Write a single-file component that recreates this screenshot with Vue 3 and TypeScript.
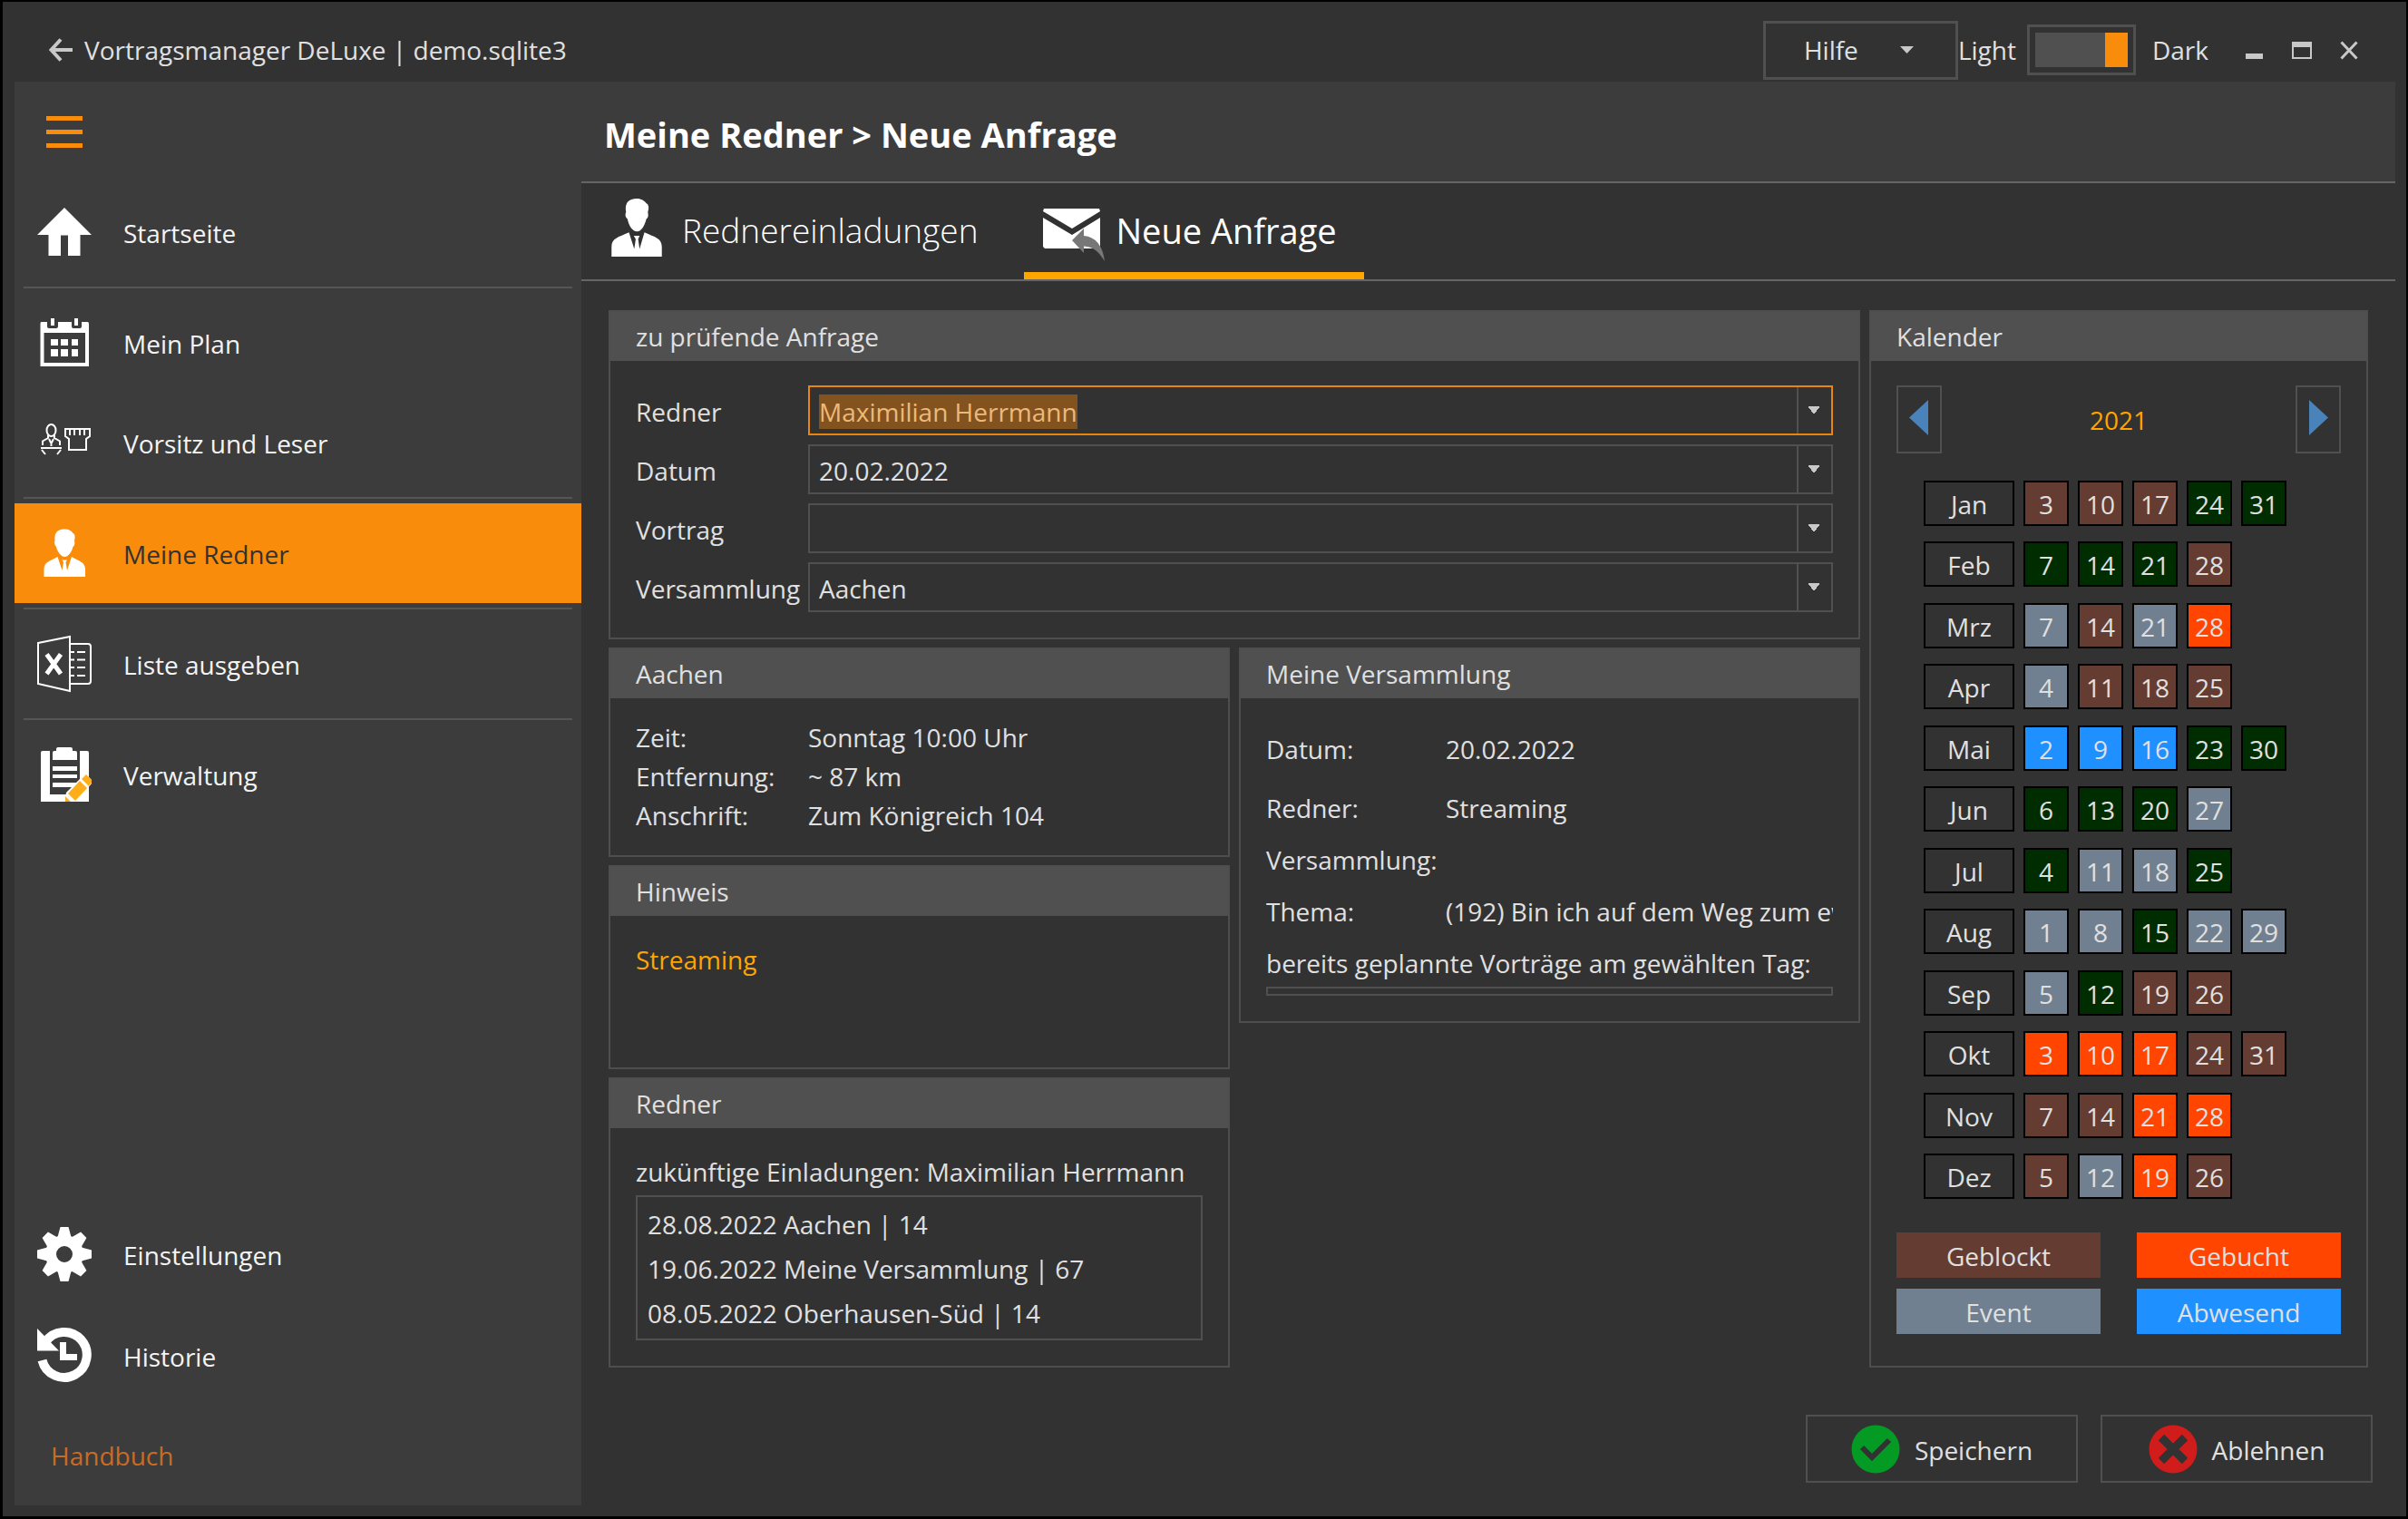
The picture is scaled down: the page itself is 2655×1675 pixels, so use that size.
<script setup lang="ts">
import { onMounted, ref } from 'vue'

type Status = 'blocked' | 'free' | 'event' | 'booked' | 'away'

interface NavItem {
  label: string
  icon: string
  active?: boolean
  ruleAfter?: boolean
}

interface Month {
  name: string
  days: [number, Status][]
}

const mainNav: NavItem[] = [
  { label: 'Startseite', icon: 'home', ruleAfter: true },
  { label: 'Mein Plan', icon: 'plan' },
  { label: 'Vorsitz und Leser', icon: 'chair', ruleAfter: true },
  { label: 'Meine Redner', icon: 'person', active: true, ruleAfter: true },
  { label: 'Liste ausgeben', icon: 'excel', ruleAfter: true },
  { label: 'Verwaltung', icon: 'clipboard' },
]

const footNav: NavItem[] = [
  { label: 'Einstellungen', icon: 'gear' },
  { label: 'Historie', icon: 'history' },
]

const statusByLetter: Record<string, Status> = {
  b: 'blocked',
  f: 'free',
  e: 'event',
  g: 'booked',
  a: 'away',
}

const plan: [string, string][] = [
  ['Jan', '3b 10b 17b 24f 31f'],
  ['Feb', '7f 14f 21f 28b'],
  ['Mrz', '7e 14b 21e 28g'],
  ['Apr', '4e 11b 18b 25b'],
  ['Mai', '2a 9a 16a 23f 30f'],
  ['Jun', '6f 13f 20f 27e'],
  ['Jul', '4f 11e 18e 25f'],
  ['Aug', '1e 8e 15f 22e 29e'],
  ['Sep', '5e 12f 19b 26b'],
  ['Okt', '3g 10g 17g 24b 31b'],
  ['Nov', '7b 14b 21g 28g'],
  ['Dez', '5b 12e 19g 26b'],
]

const months: Month[] = plan.map(([name, list]) => ({
  name,
  days: list
    .split(' ')
    .map((d): [number, Status] => [parseInt(d, 10), statusByLetter[d.slice(-1)]]),
}))

const legend: { label: string; status: Status }[] = [
  { label: 'Geblockt', status: 'blocked' },
  { label: 'Gebucht', status: 'booked' },
  { label: 'Event', status: 'event' },
  { label: 'Abwesend', status: 'away' },
]

const invitations = [
  '28.08.2022 Aachen | 14',
  '19.06.2022 Meine Versammlung | 67',
  '08.05.2022 Oberhausen-Süd | 14',
]

const year = ref(2021)
const dark = ref(true)
const speaker = ref('Maximilian Herrmann')
const speakerInput = ref<HTMLInputElement | null>(null)

onMounted(() => {
  speakerInput.value?.focus()
  speakerInput.value?.select()
})
</script>

<template>
  <div class="window">
    <header class="titlebar">
      <button class="plain back" type="button" aria-label="Zurück">
        <svg width="26" height="26" viewBox="0 0 26 26">
          <path d="M13 1.500L2.500 13L13 24.500M3 13H26" fill="none" stroke="#c8c8c8" stroke-width="4" />
        </svg>
      </button>
      <span class="apptitle">Vortragsmanager DeLuxe | demo.sqlite3</span>
      <button class="help" type="button">
        Hilfe
        <svg width="15" height="8" viewBox="0 0 15 8"><path d="M0 0H15L7.500 8Z" fill="#c8c8c8" /></svg>
      </button>
      <label class="theme">
        <span>Light</span>
        <input v-model="dark" class="switch" type="checkbox" />
        <span>Dark</span>
      </label>
      <div class="winbuttons">
        <button class="plain" type="button" aria-label="Minimieren">
          <svg width="22" height="22" viewBox="0 0 22 22"><path d="M1 15H20V21H1Z" fill="#c8c8c8" /></svg>
        </button>
        <button class="plain" type="button" aria-label="Maximieren">
          <svg width="22" height="22" viewBox="0 0 22 22">
            <path d="M0 2H22V21H0ZM2 8V19H20V8Z" fill="#c8c8c8" fill-rule="evenodd" />
          </svg>
        </button>
        <button class="plain" type="button" aria-label="Schließen">
          <svg width="22" height="22" viewBox="0 0 22 22">
            <path d="M2.500 2.500L19.500 20.500M19.500 2.500L2.500 20.500" fill="none" stroke="#c8c8c8" stroke-width="3" />
          </svg>
        </button>
      </div>
    </header>

    <div class="body">
      <aside class="sidebar">
        <button class="plain burger" type="button" aria-label="Menü">
          <svg width="40" height="36" viewBox="0 0 40 36">
            <path d="M0 0H40V5H0ZM0 15H40V20H0ZM0 30H40V35H0Z" fill="#f98c0a" />
          </svg>
        </button>
        <nav class="nav">
          <template v-for="item in mainNav" :key="item.label">
            <a href="#" class="navitem" :class="{ active: item.active }">
              <svg v-if="item.icon === 'home'" width="60" height="60" viewBox="0 0 60 60">
                <path d="M30 3L60 33H47.500V56H34V33.500H26V56H12.500V33H0Z" fill="#fff" />
              </svg>
              <svg v-else-if="item.icon === 'plan'" width="60" height="60" viewBox="0 0 60 60">
                <path
                  d="M4.500 7H11V12Q11 14 13 14H21Q23 14 23 12V7H38V12Q38 14 40 14H47Q49 14 49 12V7H55.500Q57 7 57 9V56H3.500V9Q3.500 7 4.500 7ZM7.500 19V52H53V19Z"
                  fill="#fff"
                  fill-rule="evenodd"
                />
                <path
                  d="M15 3H19V11H15ZM41 3H45V11H41ZM15 26H23V33H15ZM26 26H34V33H26ZM38 26H45V33H38ZM15 37H23V45H15ZM26 37H34V45H26ZM38 37H45V45H38Z"
                  fill="#fff"
                />
              </svg>
              <svg v-else-if="item.icon === 'chair'" width="60" height="60" viewBox="0 0 60 60">
                <g fill="none" stroke="#fff" stroke-width="2">
                  <ellipse cx="15.500" cy="16.500" rx="5" ry="6.500" />
                  <path d="M12 22V25L6 28.500V33M19 22V25L25 28.500V33M13 26L15.500 31L18 26M15.500 29V34" />
                  <path d="M4 36H27M5 38L9 43M26 38L22 43" />
                  <path d="M31 15H58V23L54 26V38H35V26L31 23ZM36 16V22M41 16V22M47 16V22M52 16V22" />
                </g>
              </svg>
              <svg v-else-if="item.icon === 'person'" width="60" height="60" viewBox="0 0 60 60">
                <path
                  d="M29 3.500C34 3 38 5 39.500 8C42 9 42 13 41 16C42 19 41 22 39.500 23C38 29 34 34 30.500 34C26.500 34 22.500 29 21 23C19 21 18.500 18 19.500 16C18.500 8 22 4 29 3.500Z"
                  fill="#fff"
                />
                <path
                  d="M7.500 56V48C7.500 40 13 39 22.500 34L27.500 49L29 40L27.500 37.500H33L31.500 40L33 49L38 34C47 39 53 40 53 48V56Z"
                  fill="#fff"
                />
              </svg>
              <svg v-else-if="item.icon === 'excel'" width="60" height="62" viewBox="0 0 60 62">
                <path d="M1 8L36 1V61L1 53ZM36 9H56Q59 9 59 12V50Q59 53 56 53H36" fill="none" stroke="#fff" stroke-width="2" />
                <path
                  d="M36 18H41M44 18H53M36 26.500H41M44 26.500H53M36 35H41M44 35H53M36 44H41M44 44H53"
                  stroke="#fff"
                  stroke-width="2"
                />
                <path d="M10.500 20.500L26 42M26 20.500L10.500 42" fill="none" stroke="#fff" stroke-width="5" />
              </svg>
              <svg v-else width="60" height="60" viewBox="0 0 60 60">
                <path
                  d="M6 4H14V52H47V4H55Q57 4 57 6V60H4V6Q4 4 6 4ZM17 6Q17 4 19 4H21V2Q21 0 23 0H37Q39 0 39 2V4H42Q44 4 44 6V14H17ZM17 21H44V26H17ZM17 30H44V34H17ZM17 39H44V44H17Z"
                  fill="#fff"
                />
                <path d="M30 60L32 50L53 29L60 36V40L43 60Z" fill="#fff" />
                <path d="M49 35L54 30L60 36V39L57 43ZM47 37L55 45L42 59L34 51ZM31 54L37 60H31Z" fill="#ffae19" />
              </svg>
              <span>{{ item.label }}</span>
            </a>
            <hr v-if="item.ruleAfter" class="rule" />
          </template>
        </nav>
        <nav class="nav foot">
          <a v-for="item in footNav" :key="item.label" href="#" class="navitem">
            <svg v-if="item.icon === 'gear'" width="60" height="60" viewBox="0 0 60 60">
              <circle cx="30" cy="30" r="15" fill="none" stroke="#fff" stroke-width="12" />
              <path
                v-for="n in 8"
                :key="n"
                d="M22 13L25.500 0H34.500L38 13Z"
                fill="#fff"
                :transform="`rotate(${n * 45} 30 30)`"
              />
            </svg>
            <svg v-else width="60" height="60" viewBox="0 0 60 60">
              <path d="M9 15A25 25 0 1 1 5.500 35" fill="none" stroke="#fff" stroke-width="10" />
              <path d="M0 0L24 24.500H0Z" fill="#fff" />
              <path d="M25 15H32V28H44V35H25Z" fill="#fff" />
            </svg>
            <span>{{ item.label }}</span>
          </a>
        </nav>
        <a href="#" class="manual">Handbuch</a>
      </aside>

      <main class="main">
        <h1 class="heading">Meine Redner &gt; Neue Anfrage</h1>
        <nav class="tabs">
          <button class="tab" type="button">
            <svg width="64" height="64" viewBox="0 0 60 60">
              <path
                d="M29 0C34 -0.500 38 2 40 5C42.500 6 43 10 41.500 14C42.500 18 41.500 20 40 21C38 29 34 34 30.500 34C26.500 34 22 29 20.500 21C18 19 18 16 19 14C17.500 5 21 0.500 29 0Z"
                fill="#fff"
              />
              <path
                d="M4 60V50C4 41 11 40 22 35L27.500 52L29 42L27 38.500H33L31.500 42L33 52L38 35C49 40 56 41 56 50V60Z"
                fill="#fff"
              />
            </svg>
            <span>Rednereinladungen</span>
          </button>
          <button class="tab current" type="button">
            <svg width="70" height="76" viewBox="0 -16 70 76">
              <path d="M2 1H63L64 4L33 23L1 4ZM1 11L33 30L64 11V43L62 45H3L1 43Z" fill="#fff" />
              <path d="M33 36L46 23V31C59 32 67 42 69 59C62 48 56 43 46 42.500V50Z" fill="#777" />
            </svg>
            <span>Neue Anfrage</span>
          </button>
        </nav>

        <div class="content">
          <div class="details">
            <section class="panel wide">
              <h2>zu prüfende Anfrage</h2>
              <form class="fields" @submit.prevent>
                <label for="redner">Redner</label>
                <div class="combo focus">
                  <input id="redner" ref="speakerInput" v-model="speaker" type="text" />
                  <button type="button" aria-label="Redner auswählen"></button>
                </div>
                <label for="datum">Datum</label>
                <select id="datum"><option>20.02.2022</option></select>
                <label for="vortrag">Vortrag</label>
                <select id="vortrag"><option></option></select>
                <label for="versammlung">Versammlung</label>
                <select id="versammlung"><option>Aachen</option></select>
              </form>
            </section>

            <div class="stack">
              <section class="panel">
                <h2>Aachen</h2>
                <dl class="place">
                  <dt>Zeit:</dt>
                  <dd>Sonntag 10:00 Uhr</dd>
                  <dt>Entfernung:</dt>
                  <dd>~ 87 km</dd>
                  <dt>Anschrift:</dt>
                  <dd>Zum Königreich 104</dd>
                </dl>
              </section>
              <section class="panel">
                <h2>Hinweis</h2>
                <p class="hint">Streaming</p>
              </section>
              <section class="panel">
                <h2>Redner</h2>
                <div class="invites">
                  <p>zukünftige Einladungen: Maximilian Herrmann</p>
                  <ul>
                    <li v-for="entry in invitations" :key="entry">{{ entry }}</li>
                  </ul>
                </div>
              </section>
            </div>

            <div class="stack">
              <section class="panel">
                <h2>Meine Versammlung</h2>
                <div class="own">
                  <dl>
                    <dt class="tall">Datum:</dt>
                    <dd class="tall">20.02.2022</dd>
                    <dt class="tall">Redner:</dt>
                    <dd class="tall">Streaming</dd>
                    <dt>Versammlung:</dt>
                    <dd></dd>
                    <dt>Thema:</dt>
                    <dd>(192) Bin ich auf dem Weg zum ewigen</dd>
                  </dl>
                  <p>bereits geplannte Vorträge am gewählten Tag:</p>
                  <div class="emptylist"></div>
                </div>
              </section>
            </div>
          </div>

          <section class="panel calendar">
            <h2>Kalender</h2>
            <div class="calbody">
              <div class="years">
                <button type="button" aria-label="Vorheriges Jahr" @click="year--">
                  <svg width="22" height="40" viewBox="0 0 22 40"><path d="M21 0V39L0 19.500Z" fill="#4a82ba" /></svg>
                </button>
                <span>{{ year }}</span>
                <button type="button" aria-label="Nächstes Jahr" @click="year++">
                  <svg width="22" height="40" viewBox="0 0 22 40"><path d="M1 0V39L22 19.500Z" fill="#4a82ba" /></svg>
                </button>
              </div>
              <div class="months">
                <div v-for="month in months" :key="month.name" class="month">
                  <span class="name">{{ month.name }}</span>
                  <span v-for="[day, status] in month.days" :key="day" class="day" :class="status">{{ day }}</span>
                </div>
              </div>
              <div class="legend">
                <span v-for="entry in legend" :key="entry.label" :class="entry.status">{{ entry.label }}</span>
              </div>
            </div>
          </section>
        </div>

        <footer class="actions">
          <button type="button">
            <svg width="54" height="54" viewBox="0 0 54 54">
              <circle cx="27" cy="27" r="26.500" fill="#049b24" />
              <path d="M12 25L23 36L42 17" fill="none" stroke="#323232" stroke-width="6" />
            </svg>
            <span>Speichern</span>
          </button>
          <button type="button">
            <svg width="54" height="54" viewBox="0 0 54 54">
              <circle cx="27" cy="27" r="26.500" fill="#d11c1c" />
              <path d="M14 14L40 40M40 14L14 40" fill="none" stroke="#323232" stroke-width="9" />
            </svg>
            <span>Ablehnen</span>
          </button>
        </footer>
      </main>
    </div>
  </div>
</template>

<style>
body {
  margin: 0;
  background: #323232;
}
</style>

<style scoped>
.window {
  box-sizing: border-box;
  min-height: 100vh;
  display: flex;
  flex-direction: column;
  padding: 0 12px 12px 13px;
  border: solid #000;
  border-width: 2px 2px 3px 3px;
  background: #323232;
  color: #e0e0e0;
  font: 28px/40px 'Open Sans', 'Noto Sans', sans-serif;
}
* {
  box-sizing: border-box;
}
button,
input,
select {
  font: inherit;
  color: inherit;
  background: none;
  border: 0;
  border-radius: 0;
  margin: 0;
  padding: 0;
  outline: none;
}
svg {
  display: block;
  flex: none;
  overflow: visible;
}
h1,
h2,
p,
dl,
dt,
dd,
ul {
  margin: 0;
  padding: 0;
  list-style: none;
}
a {
  text-decoration: none;
  color: inherit;
}

.titlebar {
  height: 88px;
  display: flex;
  align-items: center;
  padding: 18px 40px 0 38px;
}
.apptitle {
  margin-left: 13px;
}
.help {
  display: flex;
  align-items: center;
  gap: 46px;
  width: 215px;
  height: 65px;
  margin-left: auto;
  padding-left: 42px;
  border: 3px solid #505050;
}
.theme {
  display: flex;
  align-items: center;
}
.switch {
  appearance: none;
  display: flex;
  justify-content: flex-start;
  width: 120px;
  height: 56px;
  margin: 0 18px 0 12px;
  padding: 6px;
  border: 3px solid #505050;
  background: #505050 content-box;
}
.switch:checked {
  justify-content: flex-end;
}
.switch::before {
  content: '';
  width: 25px;
  background: #f98c0a;
}
.winbuttons {
  display: flex;
  gap: 30px;
  margin-left: 40px;
}

.body {
  flex: 1;
  display: flex;
}
.sidebar {
  width: 625px;
  flex: none;
  display: flex;
  flex-direction: column;
  background: #3c3c3c;
}
.burger {
  align-self: flex-start;
  margin: 38px 0 37px 35px;
}
.nav {
  display: flex;
  flex-direction: column;
}
.navitem {
  display: flex;
  align-items: center;
  gap: 35px;
  height: 110px;
  padding-left: 25px;
  color: #f4f4f4;
}
.navitem span {
  padding-top: 2px;
}
.active {
  background: #f98c0a;
  color: #323232;
}
.rule {
  width: auto;
  height: 2px;
  margin: 5px 10px;
  border: 0;
  background: #555;
}
.foot {
  margin-top: auto;
  gap: 2px;
}
.manual {
  margin: 35px 40px;
  color: #ca6b24;
}

.main {
  flex: 1;
  min-width: 0;
  display: flex;
  flex-direction: column;
}
.heading {
  height: 112px;
  padding: 32px 25px 0;
  background: #3c3c3c;
  border-bottom: 2px solid #666;
  color: #fff;
  font-size: 38px;
  line-height: 52px;
}
.tabs {
  display: flex;
  gap: 20px;
  height: 108px;
  padding-left: 12px;
  border-bottom: 2px solid #666;
}
.tab {
  display: flex;
  align-items: center;
  gap: 18px;
  padding: 0 30px 8px 17px;
  color: #fff;
  font-size: 37px;
  font-weight: 300;
  line-height: 52px;
}
.tab span {
  padding-top: 6px;
}
.current {
  gap: 12px;
  padding: 0 30px 0 20px;
  border-bottom: 8px solid #ffa500;
  font-size: 38px;
  font-weight: 400;
}

.content {
  display: grid;
  grid-template-columns: 1fr 550px;
  gap: 10px;
  padding: 32px 30px;
}
.details {
  display: grid;
  grid-template-columns: 1fr 1fr;
  gap: 9px 10px;
  align-content: start;
}
.wide {
  grid-column: 1 / -1;
}
.stack {
  min-width: 0;
  display: flex;
  flex-direction: column;
  gap: 9px;
}
.panel {
  min-width: 0;
  border: 2px solid #4e4e4e;
}
.panel h2 {
  padding: 7px 28px;
  background: #505050;
  font-size: 28px;
  font-weight: 400;
  line-height: 40px;
}
.fields {
  display: grid;
  grid-template-columns: 190px 1fr;
  align-items: center;
  gap: 10px 0;
  padding: 27px 28px 28px;
}
.fields label {
  padding-top: 2px;
}
.combo,
.fields select {
  height: 55px;
  width: 100%;
  border: 2px solid #505050;
}
.fields select {
  appearance: none;
  padding: 2px 50px 0 10px;
  background:
    conic-gradient(from -37deg at 50% 100%, #c8c8c8 74deg, transparent 0) right 12px top 21px / 14px 9px no-repeat,
    linear-gradient(#505050, #505050) right 36px top 0 / 2px 100% no-repeat;
}
.combo {
  display: flex;
  align-items: center;
  border-color: #e8850c;
}
.combo input {
  flex: 1;
  min-width: 0;
  height: 42px;
  padding: 2px 10px 0;
}
.combo input::selection {
  background: #83531f;
  color: #ecb97a;
}
.combo button {
  width: 38px;
  height: 51px;
  border-left: 2px solid #505050;
  background: conic-gradient(from -37deg at 50% 100%, #c8c8c8 74deg, transparent 0) right 12px top 21px / 14px 9px
    no-repeat;
}
.place {
  display: grid;
  grid-template-columns: 190px 1fr;
  padding: 22px 28px;
  line-height: 43px;
}
.hint {
  min-height: 167px;
  padding: 28px;
  color: #ffa500;
}
.invites {
  padding: 28px;
}
.invites ul {
  margin-top: 6px;
  padding: 6px 11px 3px;
  border: 2px solid #505050;
  line-height: 49px;
}
.own {
  padding: 28px;
}
.own dl {
  display: grid;
  grid-template-columns: 198px 1fr;
}
.own dt,
.own dd {
  height: 40px;
  margin-bottom: 17px;
  white-space: nowrap;
}
.own dd {
  overflow: hidden;
}
.own .tall {
  height: 55px;
  margin-bottom: 10px;
  line-height: 56px;
}
.emptylist {
  height: 10px;
  margin-top: 6px;
  border: 2px solid #505050;
}

.calbody {
  padding: 27px 28px 32px;
}
.years {
  display: flex;
  align-items: center;
  justify-content: space-between;
  color: #ffa500;
}
.years button {
  width: 50px;
  height: 75px;
  display: flex;
  justify-content: center;
  padding-top: 14px;
  border: 2px solid #505050;
}
.months {
  display: flex;
  flex-direction: column;
  justify-content: space-between;
  height: 792px;
  margin: 30px 30px 37px;
}
.month {
  display: flex;
  gap: 10px;
}
.name,
.day {
  width: 50px;
  height: 50px;
  border: 2px solid #000;
  line-height: 48px;
  text-align: center;
}
.name {
  width: 100px;
}
.legend {
  display: grid;
  grid-template-columns: 1fr 1fr;
  gap: 12px 40px;
  line-height: 48px;
  text-align: center;
}
.legend span {
  padding-top: 2px;
}
.blocked {
  background: #643c32;
}
.free {
  background: #002d00;
}
.event {
  background: #708090;
}
.booked {
  background: #ff4500;
}
.away {
  background: #1e90ff;
}

.actions {
  display: flex;
  justify-content: flex-end;
  gap: 25px;
  margin-top: auto;
  padding: 0 25px 25px;
}
.actions button {
  display: flex;
  align-items: center;
  justify-content: center;
  gap: 16px;
  width: 300px;
  height: 75px;
  border: 2px solid #505050;
}
.actions span {
  padding-top: 2px;
}
</style>
